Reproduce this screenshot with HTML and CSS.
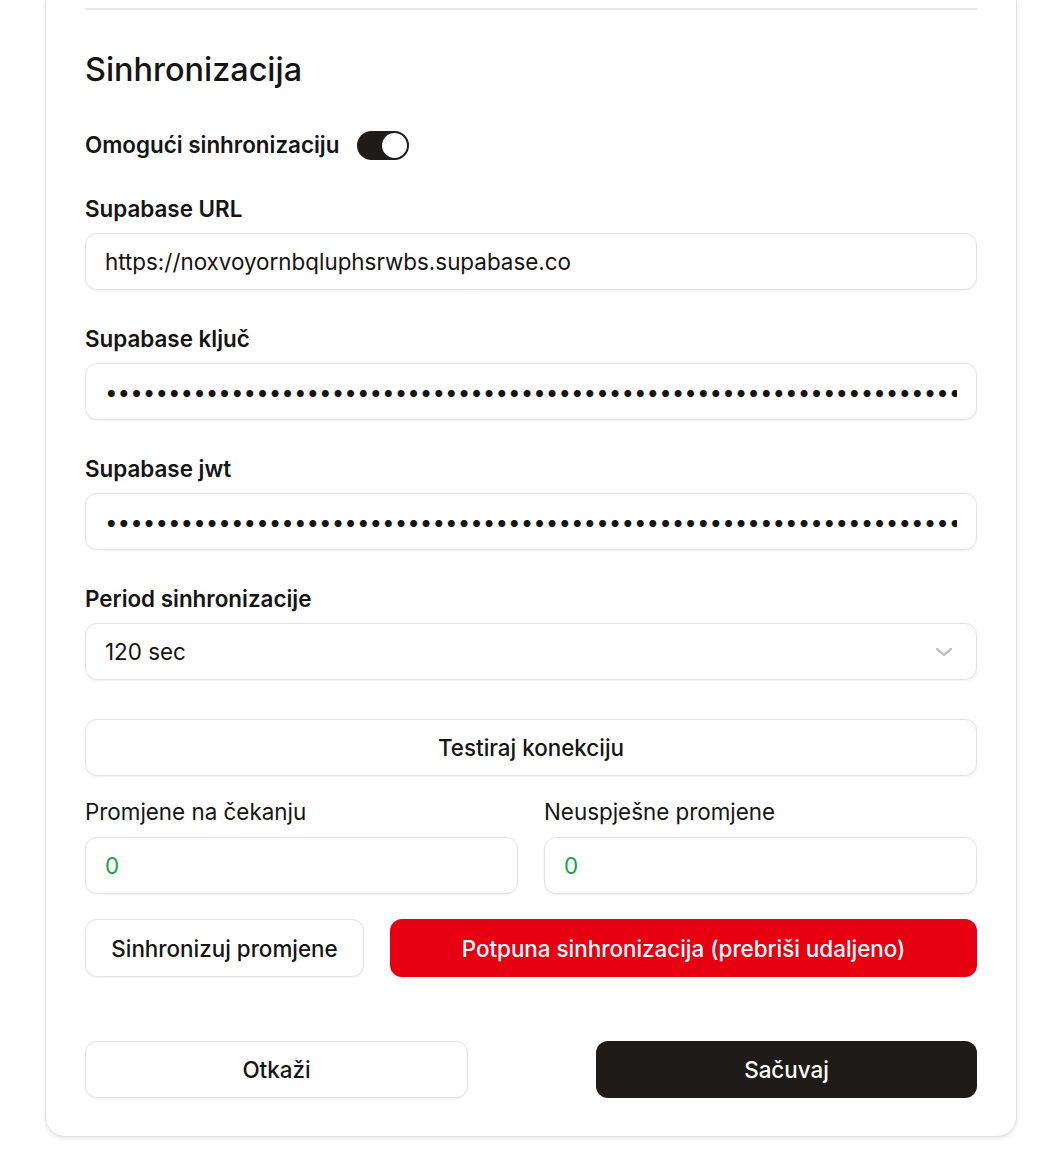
FILE: index.html
```html
<!DOCTYPE html>
<html lang="bs">
<head>
<meta charset="utf-8">
<title>Sinhronizacija</title>
<link rel="stylesheet" href="styles.css">
</head>
<body>
<div class="card">
  <hr class="divider">
  <h2 class="title">Sinhronizacija</h2>

  <div class="toggle-row">
    <span class="label">Omogući sinhronizaciju</span>
    <span class="switch"><span class="knob"></span></span>
  </div>

  <div class="field">
    <label class="label">Supabase URL</label>
    <input class="input" type="text" value="https://noxvoyornbqluphsrwbs.supabase.co">
  </div>

  <div class="field">
    <label class="label">Supabase ključ</label>
    <input class="input" type="password" value="eyJhbGciOiJIUzI1NiIsInR5cCI6IkpXVCJ9eyJpc3MiOiJzdXBhYmFzZSIsInJlZiI6Im5veHZveW9ybmJxbHVwaHNyd2JzIiwicm9sZSI6ImFub24ifQ">
  </div>

  <div class="field">
    <label class="label">Supabase jwt</label>
    <input class="input" type="password" value="eyJhbGciOiJIUzI1NiIsInR5cCI6IkpXVCJ9eyJpc3MiOiJzdXBhYmFzZSIsInJlZiI6Im5veHZveW9ybmJxbHVwaHNyd2JzIiwicm9sZSI6ImFub24ifQ">
  </div>

  <div class="field">
    <label class="label">Period sinhronizacije</label>
    <div class="select">
      <span>120 sec</span>
      <svg class="chev" width="20" height="20" viewBox="0 0 20 20" fill="none"><path d="M3 7 L10 13 L17 7" stroke="#b8b8b8" stroke-width="2.2" stroke-linecap="round" stroke-linejoin="round"/></svg>
    </div>
  </div>

  <button class="btn btn-outline btn-full">Testiraj konekciju</button>

  <div class="stats">
    <div class="stat">
      <span class="stat-label">Promjene na čekanju</span>
      <div class="input stat-value">0</div>
    </div>
    <div class="stat">
      <span class="stat-label">Neuspješne promjene</span>
      <div class="input stat-value">0</div>
    </div>
  </div>

  <div class="sync-row">
    <button class="btn btn-outline btn-sync">Sinhronizuj promjene</button>
    <button class="btn btn-red">Potpuna sinhronizacija (prebriši udaljeno)</button>
  </div>

  <div class="footer">
    <button class="btn btn-outline btn-cancel">Otkaži</button>
    <button class="btn btn-dark btn-save">Sačuvaj</button>
  </div>
</div>
</body>
</html>
```
FILE: styles.css
```css
* { box-sizing: border-box; }
html, body { margin: 0; padding: 0; background: #ffffff; }
body {
  font-family: Inter, "Noto Sans", "Liberation Sans", sans-serif;
  color: #141414;
  width: 1064px;
  height: 1168px;
  overflow: hidden;
}
.card {
  margin-left: 45px;
  width: 972px;
  background: #fff;
  border: 1px solid #e4e4e4;
  border-top: 0;
  border-radius: 0 0 20px 20px;
  box-shadow: 0 2px 4px rgba(0,0,0,0.09);
  padding: 0 39px 38px 39px;
  display: flex;
  flex-direction: column;
}
.divider {
  margin: 8px 0 0 0;
  border: 0;
  border-top: 2px solid #e8e8e8;
  height: 0;
}
.title {
  margin: 40px 0 0 0;
  font-size: 32.4px;
  line-height: 40px;
  font-weight: 500;
}
.toggle-row {
  margin-top: 40px;
  display: flex;
  align-items: center;
  gap: 18px;
  height: 30px;
}
.label {
  font-size: 22.4px;
  line-height: 26px;
  font-weight: 600;
  display: block;
}
.switch {
  width: 52px;
  height: 29px;
  border-radius: 15px;
  background: #1f1b18;
  display: flex;
  align-items: center;
  justify-content: flex-end;
  padding: 0 2px;
}
.knob {
  width: 25px;
  height: 25px;
  border-radius: 50%;
  background: #fff;
}
.field {
  display: flex;
  flex-direction: column;
  gap: 11px;
}
.toggle-row + .field { margin-top: 36px; }
.field + .field { margin-top: 36px; }
.input {
  width: 100%;
  height: 57px;
  border: 1px solid #e3e3e3;
  border-radius: 12px;
  background: #fff;
  box-shadow: 0 1px 2px rgba(0,0,0,0.06);
  padding: 0 19px;
  font-family: inherit;
  font-size: 22.4px;
  color: #141414;
  outline: none;
}
.select {
  height: 57px;
  border: 1px solid #e3e3e3;
  border-radius: 12px;
  box-shadow: 0 1px 2px rgba(0,0,0,0.06);
  padding: 0 22px 0 19px;
  display: flex;
  align-items: center;
  justify-content: space-between;
  font-size: 22.4px;
}
.btn {
  font-family: inherit;
  font-size: 22.4px;
  font-weight: 500;
  height: 58px;
  border-radius: 12px;
  cursor: pointer;
}
.btn-outline {
  background: #fff;
  color: #141414;
  border: 1px solid #e3e3e3;
  box-shadow: 0 1px 2px rgba(0,0,0,0.06);
  font-weight: 450;
}
.btn-full {
  margin-top: 39px;
  width: 100%;
  height: 57px;
}
.stats {
  margin-top: 23px;
  display: grid;
  grid-template-columns: 1fr 1fr;
  gap: 26px;
}
.stat {
  display: flex;
  flex-direction: column;
  gap: 12px;
}
.stat-label {
  font-size: 22.4px;
  line-height: 26px;
  font-weight: 400;
}
.stat-value {
  display: flex;
  align-items: center;
  height: 57px;
  color: #16a34a;
}
.sync-row {
  margin-top: 25px;
  display: flex;
  gap: 26px;
}
.btn-sync { width: 279px; flex: none; }
.btn-red {
  flex: 1;
  background: #e60012;
  color: #fff;
  border: 0;
}
.footer {
  margin-top: 64px;
  display: flex;
  justify-content: space-between;
}
.btn-cancel { width: 383px; height: 57px; }
.btn-save { width: 381px; height: 57px; }
.btn-dark {
  background: #1f1b18;
  color: #fff;
  border: 0;
}
```
